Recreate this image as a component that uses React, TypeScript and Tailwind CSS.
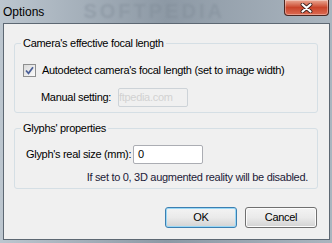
import React from 'react'

function GroupBox({ title, className, children }: { title: string; className: string; children: React.ReactNode }) {
  return (
    <div className={`relative border border-[#d5dfe5] rounded-[3px] ${className}`}>
      {/* caption sits over the top border */}
      <span className="absolute left-[6px] top-[-8px] px-[2px] bg-[#f0f0f0] leading-[14px]">{title}</span>
      {children}
    </div>
  )
}

export default function App() {
  return (
    <div
      className="w-[332px] h-[243px] flex flex-col bg-gradient-to-r from-[#bcc6cf] via-[#8d99a5] to-[#aab5bf] overflow-hidden"
      style={{ fontFamily: '"Liberation Sans", Arial, sans-serif' }}
    >
      {/* Title bar */}
      <div className="h-[23px] flex items-start pl-[3px] pr-[3px] shrink-0">
        <span className="text-[12px] text-black mt-[3px]">Options</span>
        <div className="flex-1 h-full flex items-center justify-center pr-[20px]">
          <span className="text-[20px] leading-[21px] font-bold tracking-[3px] text-[#7d8995] opacity-40 blur-[1px]">SOFTPEDIA</span>
        </div>
        <button className="w-[45px] h-[16px] rounded-b-[4px] border border-[#4b2620] border-t-0 bg-gradient-to-b from-[#e9a894] via-[#c9442a] to-[#dc6a52] flex items-center justify-center shadow-[inset_0_0_0_1px_rgba(255,255,255,0.35)]">
          <svg width="13" height="10" viewBox="0 0 13 10">
            <path d="M2.5 1.5 L10.5 8.5 M10.5 1.5 L2.5 8.5" stroke="#3b1e1a" strokeWidth="3.8" strokeLinecap="round" />
            <path d="M2.5 1.5 L10.5 8.5 M10.5 1.5 L2.5 8.5" stroke="#ffffff" strokeWidth="2.2" strokeLinecap="round" />
          </svg>
        </button>
      </div>

      {/* Client area */}
      <div className="ml-[3px] mr-[2px] h-[217px] shrink-0 border border-[#5d6873] bg-[#f0f0f0] pl-[10px] pt-[19px] text-[11px] tracking-[-0.3px] text-black">
        <GroupBox title="Camera's effective focal length" className="w-[304px] h-[70px] pl-[8px]">
          <div className="flex items-center mt-[18px] whitespace-nowrap">
            <span className="w-[13px] h-[13px] shrink-0 border border-[#8e8f8f] bg-gradient-to-br from-[#dadada] to-[#fbfbfb] flex items-center justify-center">
              <svg width="9" height="9" viewBox="0 0 9 9">
                <path d="M1 4.5 L3.5 7.3 L8 1.2" fill="none" stroke="#4a5f97" strokeWidth="1.7" />
              </svg>
            </span>
            <span className="ml-[6px]">Autodetect camera's focal length (set to image width)</span>
          </div>
          <div className="flex items-center mt-[9px] pl-[18px]">
            <span className="w-[77px]">Manual setting:</span>
            <div className="w-[70px] h-[19px] border border-[#cdd3d8] rounded-[2px] bg-[#f0f0f0] text-[11px] text-[#d2d2d2] leading-[17px]">ftpedia.com</div>
          </div>
        </GroupBox>

        <GroupBox title="Glyphs' properties" className="w-[304px] h-[61px] mt-[15px] pl-[11px] pr-[9px]">
          <div className="flex items-center mt-[16px]">
            <span className="w-[107px]">Glyph's real size (mm):</span>
            <div className="w-[70px] h-[19px] border border-[#abadb3] rounded-[2px] bg-white leading-[17px] pl-[4px]">0</div>
          </div>
          <div className="text-right text-[#1d1b38] mt-[5px] whitespace-nowrap">If set to 0, 3D augmented reality will be disabled.</div>
        </GroupBox>

        {/* Buttons */}
        <div className="flex justify-end gap-[8px] mt-[18px] w-[303px]">
          <button className="w-[72px] h-[21px] rounded-[3px] border border-[#3c7fb1] bg-gradient-to-b from-[#f3f3f3] via-[#eaeaea] to-[#d2d2d2] shadow-[inset_0_0_0_1px_#9ad8f6] leading-none text-[11px]">OK</button>
          <button className="w-[72px] h-[21px] rounded-[3px] border border-[#707070] bg-gradient-to-b from-[#f3f3f3] via-[#eaeaea] to-[#d2d2d2] shadow-[inset_0_0_0_1px_#fcfcfc] leading-none text-[11px]">Cancel</button>
        </div>
      </div>
    </div>
  )
}
